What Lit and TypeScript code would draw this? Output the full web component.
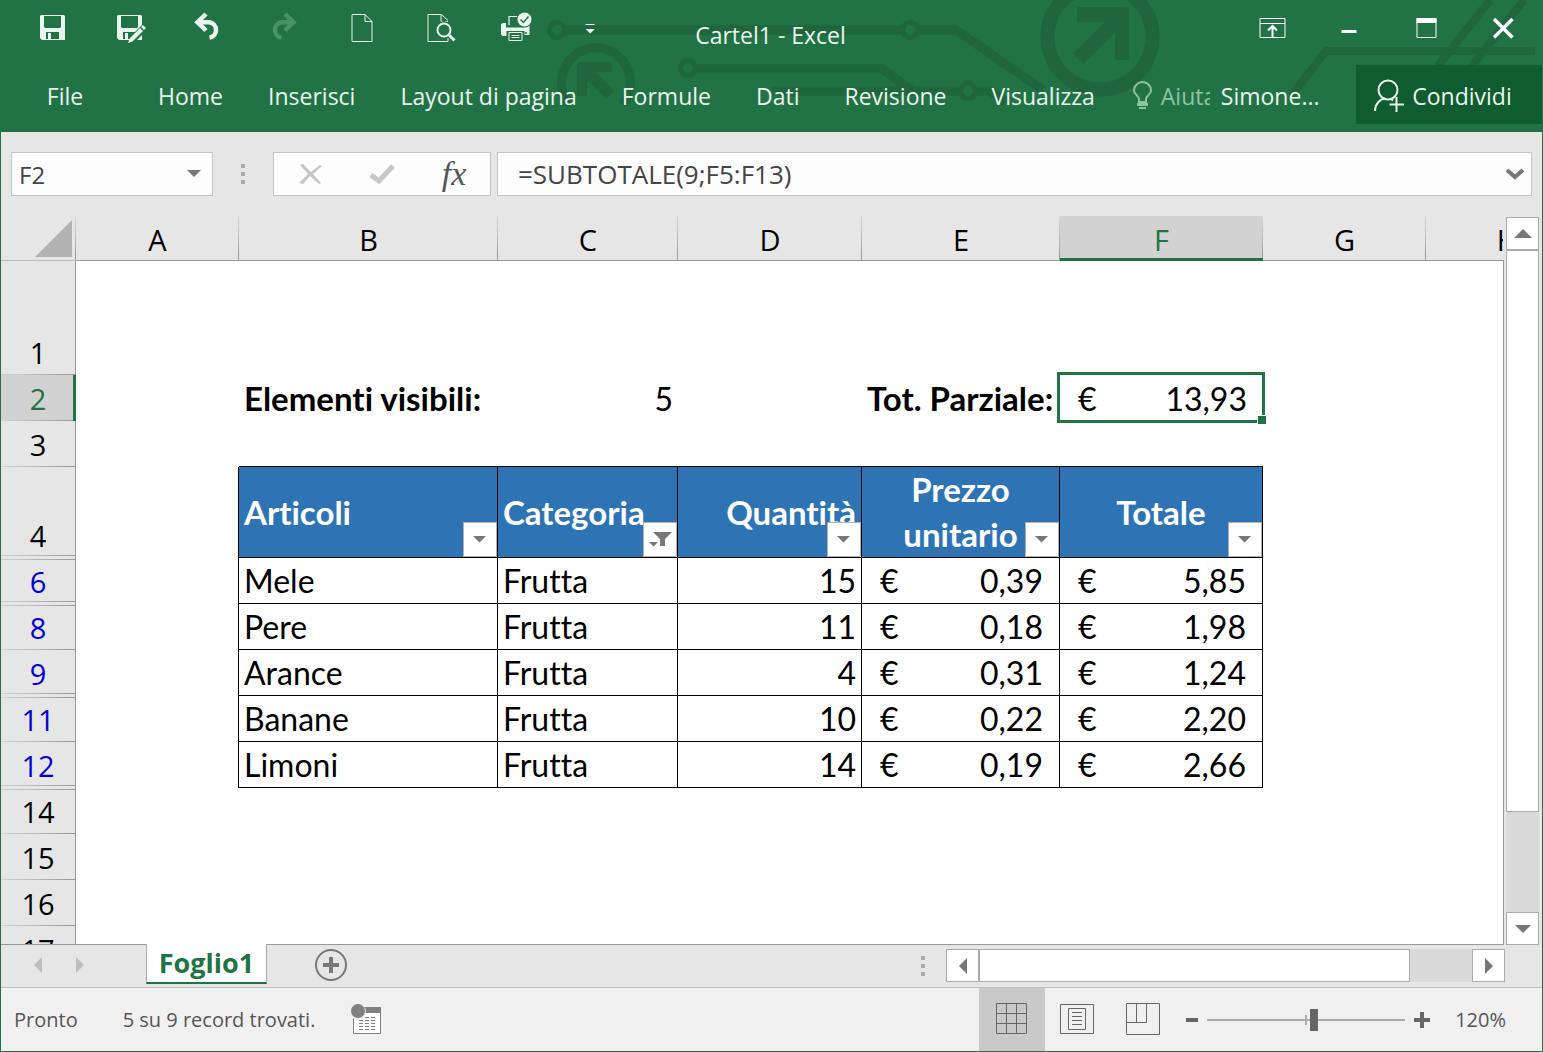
import { LitElement, html, css, svg, TemplateResult } from "lit";
import { customElement, state } from "lit/decorators.js";
import { classMap } from "lit/directives/class-map.js";

interface IconButton {
  label: string;
  icon: TemplateResult;
  disabled?: boolean;
}

interface Item {
  row: number;
  name: string;
  category: string;
  quantity: number;
  price: string;
  total: string;
  hiddenBefore: boolean;
  hiddenAfter: boolean;
}

const icon = (content: unknown, size = 32) =>
  html`<svg class="icon" width=${size} height=${size} viewBox="0 0 ${size} ${size}" aria-hidden="true">${content}</svg>`;

const quickAccess: IconButton[] = [
  {
    label: "Salva",
    icon: icon(svg`<path fill="#e9f6ee" fill-rule="evenodd" d="M4 3H27L28 4V28H5L3 26V4ZM7 4V15L8 16H23L24 15V4ZM9 20V27H11V21H14V27H22V20Z"/>`),
  },
  {
    label: "Salva con nome",
    icon: icon(svg`<path fill="#e9f6ee" fill-rule="evenodd" d="M4 3H27L28 4V28H5L3 26V4ZM7 4V15L8 16H23L24 15V4ZM9 20V27H11V21H14V27H22V20Z"/>
      <path d="M17 29L31 15" stroke="#217346" stroke-width="7"/>
      <path fill="#e9f6ee" d="M14 31L15.500 26.500L26 16L29 19L18.500 29.500ZM27 15L29 13L32 16L30 18Z"/>`),
  },
  {
    label: "Annulla",
    icon: icon(svg`<g fill="none" stroke="#e9f6ee" stroke-width="4.500"><path d="M18.500 25.600A7.800 7.800 0 0 0 18.500 10.200H8"/><path d="M15 2L6.500 10.200L15 18.500"/></g>`),
  },
  {
    label: "Ripeti",
    disabled: true,
    icon: icon(svg`<g fill="none" stroke="#48916a" stroke-width="4.500"><path d="M13.500 25.600A7.800 7.800 0 0 1 13.500 10.200H24"/><path d="M17 2L25.500 10.200L17 18.500"/></g>`),
  },
  {
    label: "Nuovo",
    icon: icon(svg`<path fill="none" stroke="#e9f6ee" d="M7 2.500H20L27 9.500V29.500H7ZM20 2.500V9.500H27"/>`),
  },
  {
    label: "Anteprima di stampa",
    icon: icon(svg`<path fill="none" stroke="#e9f6ee" d="M26 29.500H6V2.500H19.500L26 8.500M19 2.500V9.500H26"/>
      <circle cx="22" cy="18" r="9" fill="#217346"/>
      <path fill="none" stroke="#e9f6ee" d="M26 26V29.500"/>
      <circle cx="22" cy="18" r="6.500" fill="none" stroke="#e9f6ee" stroke-width="2"/>
      <path d="M26.500 22.500L32.500 28.500" stroke="#e9f6ee" stroke-width="3"/>`),
  },
  {
    label: "Stampa immediata",
    icon: icon(svg`<path fill="none" stroke="#e9f6ee" stroke-width="1.200" d="M10 13V4.500H22.500"/>
      <path fill="#e9f6ee" d="M3.500 11H7V15.500H25.500V11H28.500L30.500 13V23H25.500V19H7.500V24H3.500L2 22.500V12.500Z"/>
      <circle cx="27" cy="21" r="1" fill="#217346"/>
      <path fill="#217346" stroke="#e9f6ee" d="M10 20.500H23V28.500H10Z"/>
      <path stroke="#e9f6ee" d="M12.500 23.500H20.500M12.500 25.500H20.500"/>
      <circle cx="25.500" cy="7.500" r="8" fill="#217346"/><circle cx="25.500" cy="7.500" r="7" fill="#e9f6ee"/>
      <path fill="none" stroke="#217346" stroke-width="1.500" d="M21.500 7.500L24.500 10.500L29.500 4.500"/>`),
  },
  {
    label: "Personalizza barra di accesso rapido",
    icon: icon(svg`<path fill="#e9f6ee" d="M9.500 12H18.500V13H9.500ZM9.500 17H19L14.200 21.500Z"/>`),
  },
];

const windowControls: IconButton[] = [
  {
    label: "Opzioni visualizzazione barra multifunzione",
    icon: icon(svg`<path fill="none" stroke="#fff" d="M4 6.500H29V25.500H4ZM4 11.500H29"/><path fill="none" stroke="#fff" stroke-width="2" d="M16.500 25V14.500M12 18.500L16.500 14L21 18.500"/>`),
  },
  { label: "Riduci a icona", icon: icon(svg`<path fill="#fff" d="M8.500 18H23.500V21H8.500Z"/>`) },
  {
    label: "Ingrandisci",
    icon: icon(svg`<path fill="none" stroke="#fff" d="M7 6.500H26V25.500H7Z"/><path fill="#fff" d="M6.500 6H26.500V11H6.500Z"/>`),
  },
  { label: "Chiudi", icon: icon(svg`<path fill="none" stroke="#fff" stroke-width="3.500" d="M7 7L25.500 25.500M25.500 7L7 25.500"/>`) },
];

const tabs = ["Home", "Inserisci", "Layout di pagina", "Formule", "Dati", "Revisione", "Visualizza"];
const columns = ["A", "B", "C", "D", "E", "F", "G", "H"];

const items: Item[] = [
  { row: 6, name: "Mele", category: "Frutta", quantity: 15, price: "0,39", total: "5,85", hiddenBefore: true, hiddenAfter: true },
  { row: 8, name: "Pere", category: "Frutta", quantity: 11, price: "0,18", total: "1,98", hiddenBefore: true, hiddenAfter: false },
  { row: 9, name: "Arance", category: "Frutta", quantity: 4, price: "0,31", total: "1,24", hiddenBefore: false, hiddenAfter: true },
  { row: 11, name: "Banane", category: "Frutta", quantity: 10, price: "0,22", total: "2,20", hiddenBefore: true, hiddenAfter: false },
  { row: 12, name: "Limoni", category: "Frutta", quantity: 14, price: "0,19", total: "2,66", hiddenBefore: false, hiddenAfter: true },
];

const arrow = (d: string, w: number, h: number) =>
  html`<svg class="icon" width=${w} height=${h} viewBox="0 0 ${w} ${h}" aria-hidden="true"><path fill="currentColor" d=${d} /></svg>`;

const arrowUp = arrow("M0 9L9 0L18 9Z", 18, 9);
const arrowDown = arrow("M0 0H16L8 8Z", 16, 8);
const arrowLeft = arrow("M8 0V16L0 8Z", 8, 16);
const arrowRight = arrow("M0 0V16L8 8Z", 8, 16);

@customElement("app-root")
export class AppRoot extends LitElement {
  @state() private zoomPosition = 54;

  static styles = css`
    :host {
      display: block;
      font-family: "Open Sans", "Noto Sans", sans-serif;
      color: #444;
    }
    * {
      box-sizing: border-box;
    }
    button,
    input {
      font: inherit;
      color: inherit;
      margin: 0;
      padding: 0;
      border: 0;
      border-radius: 0;
      background: none;
    }
    button {
      display: flex;
      align-items: center;
      justify-content: center;
    }
    .icon {
      display: block;
      flex: none;
      overflow: visible;
    }
    .window {
      display: flex;
      flex-direction: column;
      height: 100vh;
      min-height: 600px;
      background: #e6e6e6;
      border: 1px solid #217346;
      border-top: 0;
      overflow: hidden;
    }

    /* Title bar and ribbon */
    .header {
      position: relative;
      flex: none;
      background: #217346;
      color: #e9f6ee;
      padding-bottom: 8px;
    }
    .art {
      position: absolute;
      top: 0;
      right: 0;
    }
    .titlebar {
      position: relative;
      display: grid;
      grid-template-columns: 1fr auto 1fr;
      height: 65px;
    }
    .quick,
    .controls {
      display: flex;
      height: 56px;
    }
    .quick {
      padding-left: 13px;
    }
    .controls {
      justify-content: flex-end;
      padding-right: 1px;
    }
    .quick button,
    .controls button {
      width: 77px;
    }
    .title {
      margin: 0;
      padding: 5px 2px 0 0;
      font-size: 23px;
      font-weight: 400;
      line-height: 60px;
    }
    .ribbon {
      position: relative;
      display: flex;
      height: 59px;
      font-size: 23px;
      line-height: 32px;
      white-space: nowrap;
    }
    .ribbon button {
      padding-top: 2px;
    }
    .file {
      width: 128px;
    }
    .tabs {
      display: flex;
      gap: 45px;
      padding-left: 29px;
      flex: none;
    }
    .help {
      flex: 0 1 78px;
      justify-content: flex-start;
      gap: 8px;
      margin-left: 37px;
      overflow: hidden;
      color: #8fc3a5;
    }
    .account {
      margin-left: 11px;
    }
    .ribbon .share {
      width: 186px;
      margin-left: auto;
      padding-right: 12px;
      gap: 8px;
      background: #0e5c2f;
      color: #e9f6ee;
    }

    /* Formula bar */
    .formulabar {
      display: flex;
      flex: none;
      padding: 20px 10px;
      font-size: 24px;
    }
    .box {
      display: flex;
      height: 44px;
      background: #fdfdfd;
      border: 1px solid #c3c3c3;
    }
    .namebox {
      width: 202px;
    }
    .namebox input {
      width: 100%;
      min-width: 0;
      padding-left: 7px;
    }
    .namebox button {
      flex: none;
      width: 36px;
      color: #777;
    }
    .grip {
      display: grid;
      flex: none;
      align-content: center;
      justify-content: center;
      gap: 4px;
      width: 60px;
    }
    .grip i {
      width: 4px;
      height: 4px;
      background: #ababab;
    }
    .entry button {
      width: 72px;
      color: #c6c6c6;
    }
    .entry .fx {
      color: #555;
      font: italic 34px "Liberation Serif", serif;
    }
    .formula {
      flex: 1;
      margin-left: 6px;
    }
    .formula input {
      flex: 1;
      min-width: 0;
      padding-left: 20px;
      font-size: 26px;
    }
    .formula button {
      width: 32px;
      color: #777;
    }

    /* Worksheet */
    .workspace {
      display: flex;
      flex: 1;
      min-height: 0;
      padding-right: 3px;
      gap: 2px;
    }
    .sheet {
      flex: 1;
      min-width: 0;
      overflow: hidden;
      border-bottom: 1px solid #999;
      background: linear-gradient(#999, #999) right 0 top 44px / 1px 100% no-repeat;
      padding-right: 1px;
    }
    .clip {
      height: 100%;
      overflow: hidden;
    }
    table {
      width: 1588px;
      table-layout: fixed;
      border-collapse: separate;
      border-spacing: 0;
      background: #fff;
      color: #000;
      font-family: Lato, "Open Sans", sans-serif;
      font-size: 32px;
      font-variant-ligatures: none;
      line-height: 45px;
    }
    .c-head { width: 75px; }
    .c-a, .c-g, .c-h { width: 163px; }
    .c-b { width: 259px; }
    .c-c { width: 180px; }
    .c-d { width: 184px; }
    .c-e { width: 198px; }
    .c-f { width: 203px; }
    th,
    td {
      position: relative;
      padding: 0 5px;
      text-align: left;
      font-weight: 400;
      vertical-align: bottom;
      white-space: nowrap;
    }
    tr {
      height: 46px;
    }
    .colhead,
    .rowhead,
    .corner {
      background-color: #e6e6e6;
      background-repeat: no-repeat;
      font-family: "Open Sans", "Noto Sans", sans-serif;
      font-size: 29px;
      text-align: center;
      padding: 0;
    }
    .headrow {
      height: 45px;
    }
    .colhead {
      padding-top: 4px;
      line-height: 40px;
      border-bottom: 1px solid #999;
      background-image: linear-gradient(#d8d8d8, #999);
      background-size: 1px 100%;
      background-position: right top;
    }
    .colhead.active {
      background-color: #d2d2d2;
      border-bottom-color: #217346;
      box-shadow: inset 0 -2px #217346;
      color: #217346;
    }
    .corner {
      padding-bottom: 3px;
      border-bottom: 1px solid #bbb;
      background-image: linear-gradient(#d8d8d8, #999);
      background-size: 1px 100%;
      background-position: right top;
    }
    .corner button {
      width: 71px;
      height: 37px;
      justify-content: flex-end;
    }
    .rowhead {
      border-right: 1px solid #999;
      background-image: linear-gradient(90deg, #d2d2d2, #999);
      background-size: 100% 1px;
      background-position: left bottom;
    }
    .rowhead.hidden-after {
      background-position: left 0 bottom 2px;
    }
    .rowhead.hidden-before {
      background-image: linear-gradient(90deg, #d2d2d2, #999), linear-gradient(90deg, #d2d2d2, #999);
      background-position: left bottom, left 0 top 1px;
    }
    .rowhead.hidden-before.hidden-after {
      background-position: left 0 bottom 2px, left 0 top 1px;
    }
    .rowhead.active {
      background-color: #d2d2d2;
      border-right-color: #217346;
      box-shadow: inset -2px 0 #217346;
      color: #217346;
    }
    .rowhead.filtered {
      color: #0000d0;
    }
    .row-tall {
      height: 114px;
    }
    .row-titles {
      height: 91px;
    }
    .bold {
      font-size: 33px;
      font-weight: 700;
    }
    .right {
      text-align: right;
    }
    .center {
      text-align: center;
    }
    .edge-left {
      border-right: 1px solid #000;
    }
    .edge-top {
      border-bottom: 1px solid #000;
    }
    .data {
      border-right: 1px solid #000;
      border-bottom: 1px solid #000;
    }
    .heading {
      background: #2e74b5;
      color: #fff;
      font-size: 33px;
      font-weight: 700;
      vertical-align: middle;
      white-space: normal;
    }
    .filter {
      position: absolute;
      right: 0;
      bottom: 0;
      width: 34px;
      height: 35px;
      background: #fff;
      border: 1px solid #b0b0b0;
      color: #777;
    }
    .euro {
      display: flex;
      justify-content: space-between;
      padding: 0 11px 0 13px;
    }
    .selection {
      position: absolute;
      inset: -3px -2px -2px -3px;
      border: 3px solid #217346;
    }
    .handle {
      position: absolute;
      right: -4px;
      bottom: -4px;
      width: 9px;
      height: 9px;
      background: #217346;
      border-top: 1px solid #fff;
      border-left: 1px solid #fff;
    }

    /* Scroll bars */
    .vscroll {
      display: flex;
      flex: none;
      flex-direction: column;
      width: 33px;
      padding-top: 1px;
      background: linear-gradient(#dadada, #dadada) left 0 top 1px / 100% 100% no-repeat;
    }
    .hscroll {
      display: flex;
      width: 559px;
      height: 33px;
      background: #dadada;
    }
    .scrollbtn {
      flex: none;
      width: 33px;
      height: 33px;
      background: #fff;
      border: 1px solid #ababab;
      color: #777;
    }
    .vscroll .end {
      margin-top: auto;
    }
    .hscroll .end {
      margin-left: auto;
    }
    .vthumb {
      flex: 0 0 85%;
      max-height: calc(100% - 166px);
      background: #fff;
      border: 1px solid #ababab;
    }
    .hthumb {
      width: 431px;
      background: #fff;
      border: 1px solid #ababab;
    }

    /* Sheet tabs */
    .sheetbar {
      display: flex;
      flex: none;
      height: 43px;
      padding-right: 37px;
      border-bottom: 1px solid #c0c0c0;
    }
    .nav {
      display: flex;
      gap: 26px;
      width: 145px;
      padding: 0 0 3px 29px;
      color: #bdbdbd;
    }
    .nav button {
      width: 16px;
    }
    .sheettab {
      position: relative;
      width: 121px;
      height: 40px;
      margin-top: -1px;
      background: #fff;
      border: 1px solid #ababab;
      border-top: 0;
      border-bottom: 2px solid #217346;
      color: #217346;
      font-size: 27px;
      font-weight: 700;
      line-height: 36px;
    }
    .add {
      width: 34px;
      margin-left: 47px;
      padding-bottom: 2px;
    }
    .sheetbar .grip {
      width: 46px;
      margin-left: auto;
    }
    .sheetbar .hscroll {
      align-self: flex-start;
      margin-top: 4px;
    }

    /* Status bar */
    .status {
      display: flex;
      flex: none;
      align-items: center;
      height: 63px;
      padding: 0 36px 0 13px;
      background: #f0f0f0;
      font-size: 20px;
      color: #555;
      white-space: nowrap;
    }
    .found {
      margin: 0 36px 0 45px;
    }
    .views {
      display: flex;
      align-self: stretch;
      margin-left: auto;
    }
    .views button {
      width: 66px;
      padding: 0 2px 2px 0;
    }
    .views .on {
      background: #c9c9c9;
    }
    .zoombtn {
      width: 16px;
      height: 32px;
    }
    .views + .zoombtn {
      margin-left: 7px;
    }
    .slider {
      display: flex;
      width: 198px;
      height: 32px;
      margin: 0 9px 0 7px;
      background: linear-gradient(#ababab, #ababab) center / 2px 10px no-repeat,
        linear-gradient(#ababab, #ababab) center / 100% 2px no-repeat;
    }
    .slider input {
      width: 100%;
      appearance: none;
      -webkit-appearance: none;
    }
    .slider input::-webkit-slider-thumb {
      appearance: none;
      -webkit-appearance: none;
      width: 8px;
      height: 22px;
      background: #666;
      border-radius: 0;
    }
    .percent {
      margin-left: 25px;
    }
  `;

  private renderArt() {
    return html`<svg class="art" width="1000" height="106" viewBox="542 0 1000 106" aria-hidden="true">
      <g fill="none" stroke="#1f653d" stroke-width="9">
        <circle cx="557" cy="30" r="7.500" stroke-width="5" />
        <path d="M566 30H901M919 30H956L1043 90" />
        <circle cx="910" cy="30" r="7.500" stroke-width="5" />
        <circle cx="688" cy="68" r="7.500" stroke-width="5" />
        <path d="M697 69H882L913 91M772 91H959M977 91H990L1006 102" />
        <circle cx="968" cy="91" r="7.500" stroke-width="5" />
        <path d="M570 105A34.500 34.500 0 1 1 622 105" />
        <circle cx="1100" cy="37" r="52.500" stroke-width="14" />
        <path stroke-width="8" d="M1535 51H1326L1291 96M1490 0L1438 66M1524 0L1472 66" />
      </g>
      <path fill="#1f653d" d="M577 62H612V72H595L614 91L606 99L587 80V96H577ZM1077 7H1129V60H1115V32L1083 64L1073 54L1105 22H1077Z" />
    </svg>`;
  }

  private renderButton(b: IconButton) {
    return html`<button type="button" aria-label=${b.label} ?disabled=${b.disabled}>${b.icon}</button>`;
  }

  private renderGrip() {
    return html`<div class="grip"><i></i><i></i><i></i></div>`;
  }

  private renderHeading(text: string, align = "", filtered = false) {
    const glyph = filtered
      ? html`<svg class="icon" width="24" height="16" viewBox="0 0 24 16" aria-hidden="true"><path fill="currentColor" d="M5 0H24L17 7V14H12V7ZM1 10H10L5.500 14.500Z" /></svg>`
      : arrow("M0 0H13L6.500 6.500Z", 14, 7);
    return html`<th scope="col" class="data heading ${align}">
      ${text}<button class="filter" type="button" aria-label="Filtra ${text}">${glyph}</button>
    </th>`;
  }

  private renderEuro(value: string) {
    return html`<div class="euro"><span>€</span><span>${value}</span></div>`;
  }

  private renderBlankRow(row: number, before = false) {
    return html`<tr>
      <th scope="row" class=${classMap({ rowhead: true, "hidden-before": before })}>${row}</th>
      <td colspan="8"></td>
    </tr>`;
  }

  private renderItem(item: Item) {
    const head = { rowhead: true, filtered: true, "hidden-before": item.hiddenBefore, "hidden-after": item.hiddenAfter };
    return html`<tr>
      <th scope="row" class=${classMap(head)}>${item.row}</th>
      <td class="edge-left"></td>
      <td class="data">${item.name}</td>
      <td class="data">${item.category}</td>
      <td class="data right">${item.quantity}</td>
      <td class="data">${this.renderEuro(item.price)}</td>
      <td class="data">${this.renderEuro(item.total)}</td>
      <td colspan="2"></td>
    </tr>`;
  }

  private renderSheet() {
    return html`<table>
      <colgroup>
        <col class="c-head" />
        ${columns.map((c) => html`<col class="c-${c.toLowerCase()}" />`)}
      </colgroup>
      <thead>
        <tr class="headrow">
          <td class="corner">
            <button type="button" aria-label="Seleziona tutto">
              <svg class="icon" width="37" height="37" viewBox="0 0 37 37" aria-hidden="true"><path fill="#b3b3b3" d="M37 0V37H0Z" /></svg>
            </button>
          </td>
          ${columns.map((c) => html`<th scope="col" class=${classMap({ colhead: true, active: c === "F" })}>${c}</th>`)}
        </tr>
      </thead>
      <tbody>
        <tr class="row-tall">
          <th scope="row" class="rowhead">1</th>
          <td colspan="8"></td>
        </tr>
        <tr>
          <th scope="row" class="rowhead active">2</th>
          <td></td>
          <td class="bold">Elementi visibili:</td>
          <td class="right">5</td>
          <td></td>
          <td class="bold">Tot. Parziale:</td>
          <td>${this.renderEuro("13,93")}<div class="selection"><div class="handle"></div></div></td>
          <td colspan="2"></td>
        </tr>
        <tr>
          <th scope="row" class="rowhead">3</th>
          <td></td>
          <td colspan="5" class="edge-top"></td>
          <td colspan="2"></td>
        </tr>
        <tr class="row-titles">
          <th scope="row" class="rowhead hidden-after">4</th>
          <td class="edge-left"></td>
          ${this.renderHeading("Articoli")} ${this.renderHeading("Categoria", "", true)}
          ${this.renderHeading("Quantità", "right")} ${this.renderHeading("Prezzo unitario", "center")}
          ${this.renderHeading("Totale", "center")}
          <td colspan="2"></td>
        </tr>
        ${items.map((item) => this.renderItem(item))}
        ${this.renderBlankRow(14, true)} ${[15, 16, 17].map((n) => this.renderBlankRow(n))}
      </tbody>
    </table>`;
  }

  render() {
    return html`<div class="window">
      <header class="header">
        ${this.renderArt()}
        <div class="titlebar">
          <div class="quick">${quickAccess.map((b) => this.renderButton(b))}</div>
          <h1 class="title">Cartel1 - Excel</h1>
          <div class="controls">${windowControls.map((b) => this.renderButton(b))}</div>
        </div>
        <nav class="ribbon">
          <button class="file" type="button">File</button>
          <div class="tabs">${tabs.map((t) => html`<button type="button">${t}</button>`)}</div>
          <button class="help" type="button">
            <svg class="icon" width="21" height="29" viewBox="0 0 21 29" aria-hidden="true">
              <path fill="none" stroke="currentColor" stroke-width="2" d="M7 21V18C7 15 2 13.500 2 9.500A8.500 8.500 0 0 1 19 9.500C19 13.500 14 15 14 18V21Z" />
              <path fill="currentColor" d="M5 22H16V25H5ZM7 26H14V28H7Z" />
            </svg>
            Aiuta
          </button>
          <button class="account" type="button">Simone...</button>
          <button class="share" type="button">
            <svg class="icon" width="30" height="33" viewBox="0 0 30 33" aria-hidden="true">
              <g fill="none" stroke="currentColor" stroke-width="2">
                <circle cx="14" cy="11" r="9.500" />
                <path d="M1 32C1 25 6 20 11 19.500M17 20L19 21.500M15.500 25.500H30M22.500 18V33" />
              </g>
            </svg>
            Condividi
          </button>
        </nav>
      </header>

      <div class="formulabar">
        <div class="box namebox">
          <input aria-label="Casella nome" .value=${"F2"} />
          <button type="button" aria-label="Apri elenco nomi">${arrow("M0 0H14L7 7Z", 14, 8)}</button>
        </div>
        ${this.renderGrip()}
        <div class="box entry">
          <button type="button" aria-label="Annulla immissione">
            <svg class="icon" width="24" height="22" viewBox="0 0 24 22" aria-hidden="true">
              <path fill="currentColor" d="M2 2L5 1L13 9L22 2L24 3L15 11L23 20L21 21L12 13L5 21L1 20L10 11Z" />
            </svg>
          </button>
          <button type="button" aria-label="Conferma immissione">
            <svg class="icon" width="26" height="22" viewBox="0 0 26 22" aria-hidden="true">
              <path fill="none" stroke="currentColor" stroke-width="5" d="M2 12L10 18L24 3" />
            </svg>
          </button>
          <button class="fx" type="button" aria-label="Inserisci funzione">fx</button>
        </div>
        <div class="box formula">
          <input aria-label="Barra della formula" .value=${"=SUBTOTALE(9;F5:F13)"} />
          <button type="button" aria-label="Espandi barra della formula">
            <svg class="icon" width="18" height="12" viewBox="0 0 18 12" aria-hidden="true">
              <path fill="none" stroke="currentColor" stroke-width="4" d="M1 2L9 9L17 2" />
            </svg>
          </button>
        </div>
      </div>

      <main class="workspace">
        <div class="sheet"><div class="clip">${this.renderSheet()}</div></div>
        <div class="vscroll">
          <button class="scrollbtn" type="button" aria-label="Scorri in alto">${arrowUp}</button>
          <div class="vthumb"></div>
          <button class="scrollbtn end" type="button" aria-label="Scorri in basso">${arrowDown}</button>
        </div>
      </main>

      <div class="sheetbar">
        <div class="nav">
          <button type="button" aria-label="Foglio precedente">${arrowLeft}</button>
          <button type="button" aria-label="Foglio successivo">${arrowRight}</button>
        </div>
        <button class="sheettab" type="button">Foglio1</button>
        <button class="add" type="button" aria-label="Nuovo foglio">
          <svg class="icon" width="34" height="34" viewBox="0 0 34 34" aria-hidden="true">
            <circle cx="17" cy="17" r="15" fill="none" stroke="#777" stroke-width="2" />
            <path stroke="#777" stroke-width="4" d="M9 17H25M17 9V25" />
          </svg>
        </button>
        ${this.renderGrip()}
        <div class="hscroll">
          <button class="scrollbtn" type="button" aria-label="Scorri a sinistra">${arrowLeft}</button>
          <div class="hthumb"></div>
          <button class="scrollbtn end" type="button" aria-label="Scorri a destra">${arrowRight}</button>
        </div>
      </div>

      <footer class="status">
        <span>Pronto</span>
        <span class="found">5 su 9 record trovati.</span>
        <button type="button" aria-label="Registra macro">
          <svg class="icon" width="31" height="31" viewBox="0 0 31 31" aria-hidden="true">
            <path fill="#fff" stroke="#808080" d="M2.500 3.500H29.500V29.500H2.500Z" />
            <path fill="#808080" d="M2 3H30V9H2Z" />
            <circle cx="7" cy="8" r="8" fill="#f0f0f0" />
            <circle cx="7" cy="7" r="7" fill="#808080" />
            <path stroke="#808080" stroke-dasharray="4 2" d="M8 16.500H25M8 19.500H25M8 22.500H25M8 25.500H25M14 13.500H25" />
          </svg>
        </button>
        <div class="views">
          <button class="on" type="button" aria-label="Normale">
            <svg class="icon" width="31" height="31" viewBox="0 0 31 31" aria-hidden="true">
              <path fill="none" stroke="#666" d="M.5 .5H30.500V30.500H.5ZM10.500 0V31M20.500 0V31M0 10.500H31M0 20.500H31" />
            </svg>
          </button>
          <button type="button" aria-label="Layout di pagina">
            <svg class="icon" width="34" height="30" viewBox="0 0 34 30" aria-hidden="true">
              <path fill="none" stroke="#666" d="M.5 .5H33.500V29.500H.5ZM8.500 4.500H25.500V25.500H8.500ZM12 8.500H22M12 12.500H22M12 16.500H22M12 20.500H22" />
            </svg>
          </button>
          <button type="button" aria-label="Anteprima interruzioni di pagina">
            <svg class="icon" width="34" height="32" viewBox="0 0 34 32" aria-hidden="true">
              <path fill="none" stroke="#666" d="M.5 .5H33.500V31.500H.5ZM10.500 0V19.500M20.500 0V19.500H0" />
            </svg>
          </button>
        </div>
        <button class="zoombtn" type="button" aria-label="Zoom indietro">
          <svg class="icon" width="12" height="4" viewBox="0 0 12 4" aria-hidden="true"><path fill="#666" d="M0 0H12V4H0Z" /></svg>
        </button>
        <div class="slider">
          <input
            type="range"
            min="0"
            max="100"
            aria-label="Zoom"
            .value=${String(this.zoomPosition)}
            @input=${(e: Event) => (this.zoomPosition = Number((e.target as HTMLInputElement).value))}
          />
        </div>
        <button class="zoombtn" type="button" aria-label="Zoom avanti">
          <svg class="icon" width="16" height="16" viewBox="0 0 16 16" aria-hidden="true"><path fill="#666" d="M0 6H6V0H10V6H16V10H10V16H6V10H0Z" /></svg>
        </button>
        <span class="percent">120%</span>
      </footer>
    </div>`;
  }
}
